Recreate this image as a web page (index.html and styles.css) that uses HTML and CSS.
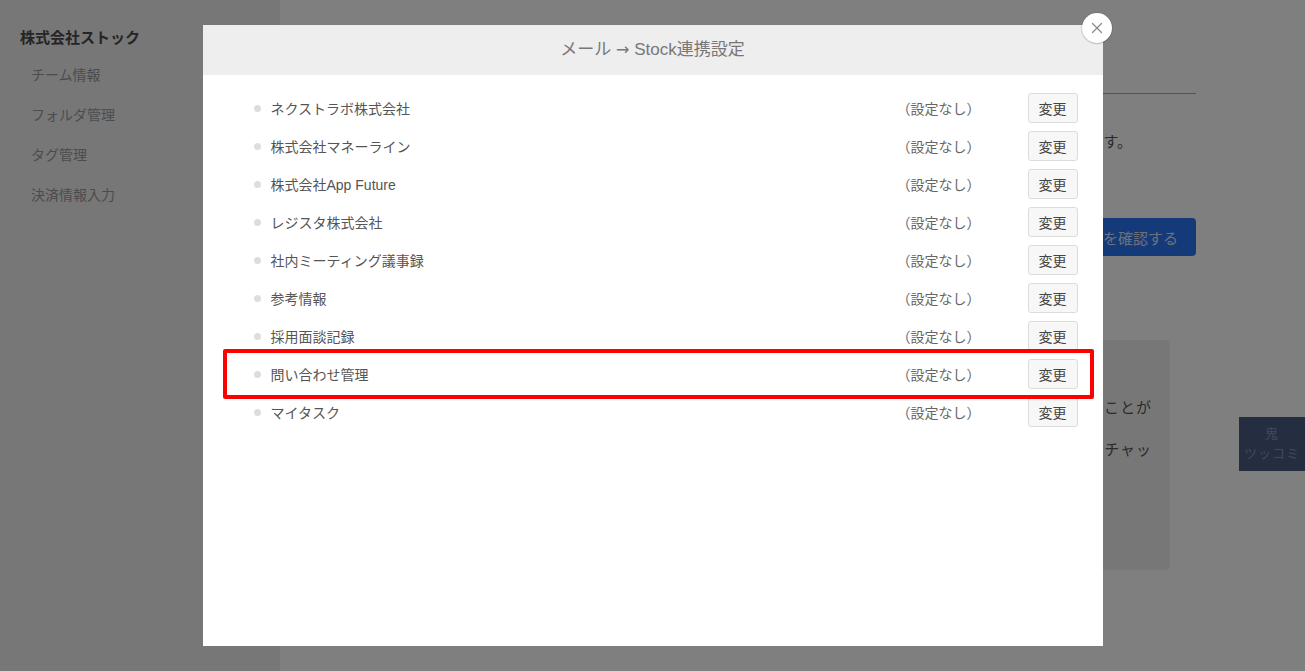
FILE: index.html
```html
<!DOCTYPE html>
<html lang="ja">
<head>
<meta charset="utf-8">
<title>メール → Stock連携設定</title>
<link rel="stylesheet" href="styles.css">
</head>
<body>
<div class="page">
  <aside class="sidebar">
    <div class="team-name">株式会社ストック</div>
    <ul class="side-menu">
      <li>チーム情報</li>
      <li>フォルダ管理</li>
      <li>タグ管理</li>
      <li>決済情報入力</li>
    </ul>
  </aside>
  <main class="main">
    <div class="content">
      <h1 class="page-title">メール連携</h1>
      <p class="lead">できる機能です。</p>
      <div class="action-row">
        <button class="primary-btn">アドレスを確認する</button>
      </div>
      <div class="info-box">
        <h2 class="info-title">使い方</h2>
        <p class="info-line">共有することが</p>
        <p class="info-line">には「チャッ</p>
      </div>
    </div>
  </main>
</div>

<div class="oni-btn">鬼<br>ツッコミ</div>

<div class="overlay"></div>

<div class="modal">
  <div class="modal-header">メール <span class="arrow">→</span> Stock連携設定</div>
  <button class="modal-close" aria-label="閉じる">
    <svg width="12" height="12" viewBox="0 0 12 12"><path d="M1.5 1.5 L10.5 10.5 M10.5 1.5 L1.5 10.5" stroke="#8a8a8a" stroke-width="1.3" fill="none" stroke-linecap="round"/></svg>
  </button>
  <ul class="folder-list">
    <li class="folder-row"><span class="dot"></span><span class="folder-name">ネクストラボ株式会社</span><span class="status">（設定なし）</span><button class="change-btn">変更</button></li>
    <li class="folder-row"><span class="dot"></span><span class="folder-name">株式会社マネーライン</span><span class="status">（設定なし）</span><button class="change-btn">変更</button></li>
    <li class="folder-row"><span class="dot"></span><span class="folder-name">株式会社App Future</span><span class="status">（設定なし）</span><button class="change-btn">変更</button></li>
    <li class="folder-row"><span class="dot"></span><span class="folder-name">レジスタ株式会社</span><span class="status">（設定なし）</span><button class="change-btn">変更</button></li>
    <li class="folder-row"><span class="dot"></span><span class="folder-name">社内ミーティング議事録</span><span class="status">（設定なし）</span><button class="change-btn">変更</button></li>
    <li class="folder-row"><span class="dot"></span><span class="folder-name">参考情報</span><span class="status">（設定なし）</span><button class="change-btn">変更</button></li>
    <li class="folder-row"><span class="dot"></span><span class="folder-name">採用面談記録</span><span class="status">（設定なし）</span><button class="change-btn">変更</button></li>
    <li class="folder-row"><span class="dot"></span><span class="folder-name">問い合わせ管理</span><span class="status">（設定なし）</span><button class="change-btn">変更</button></li>
    <li class="folder-row"><span class="dot"></span><span class="folder-name">マイタスク</span><span class="status">（設定なし）</span><button class="change-btn">変更</button></li>
  </ul>
  <div class="highlight"></div>
</div>
</body>
</html>
```

FILE: styles.css
```css
* { box-sizing: border-box; }

html, body {
  margin: 0;
  padding: 0;
  height: 100%;
}

body {
  font-family: "Liberation Sans", "Noto Sans CJK JP", sans-serif;
  color: #333;
  background: #fff;
  overflow: hidden;
}

.page {
  display: flex;
  height: 100%;
}

/* Sidebar */
.sidebar {
  width: 280px;
  flex: none;
  background: #eeeeee;
  padding: 28px 0 0 20px;
}

.team-name {
  font-size: 15px;
  font-weight: bold;
  line-height: 20px;
  color: #4a4a4a;
}

.side-menu {
  list-style: none;
  margin: 7px 0 0;
  padding: 0 0 0 11px;
}

.side-menu li {
  font-size: 14px;
  line-height: 40px;
  color: #999;
}

/* Main */
.main {
  flex: 1;
  padding: 31px 0 0 50px;
}

.content {
  width: 866px;
}

.page-title {
  margin: 0;
  font-size: 20px;
  line-height: 30px;
  font-weight: normal;
  padding: 15px 0 17px;
  border-bottom: 1px solid #a8a8a8;
  color: #333;
}

.lead {
  margin: 36px 0 0;
  font-size: 15px;
  line-height: 24px;
  color: #555;
  text-align: right;
  padding-right: 64px;
}

.action-row {
  display: flex;
  justify-content: flex-end;
  margin-top: 64px;
}

.primary-btn {
  height: 38px;
  padding: 0 18px;
  border: none;
  border-radius: 4px;
  background: #2a74f4;
  color: #d8e2f6;
  font-family: inherit;
  font-size: 15px;
}

.info-box {
  margin: 84px 26px 0 0;
  height: 230px;
  background: #eeeeee;
  border-radius: 4px;
  padding: 20px 18px;
}

.info-title {
  margin: 0 0 12px;
  font-size: 15px;
  line-height: 24px;
  color: #444;
}

.info-line {
  margin: 0 0 17px;
  font-size: 15px;
  line-height: 24px;
  color: #555;
  text-align: right;
  letter-spacing: 1px;
}

.info-line + .info-line {
  margin-top: 18px;
}

/* Floating widget (above overlay) */
.oni-btn {
  position: fixed;
  right: 0;
  top: 417px;
  width: 66px;
  height: 54px;
  background: #4b5c80;
  color: #8391b4;
  font-size: 13px;
  line-height: 20px;
  text-align: center;
  padding-top: 7px;
  letter-spacing: 1px;
  z-index: 5;
}

/* Overlay */
.overlay {
  position: fixed;
  inset: 0;
  background: rgba(0, 0, 0, 0.5);
  z-index: 10;
}

/* Modal */
.modal {
  position: fixed;
  left: 50%;
  top: 25px;
  bottom: 25px;
  width: 900px;
  margin-left: -450px;
  background: #fff;
  z-index: 20;
}

.modal-header {
  height: 50px;
  background: #eeeeee;
  color: #777;
  font-size: 17px;
  line-height: 50px;
  text-align: center;
}

.arrow {
  font-family: "DejaVu Sans", sans-serif;
  font-size: 16px;
}

.modal-close {
  position: absolute;
  top: -12px;
  right: -9px;
  width: 30px;
  height: 30px;
  border-radius: 50%;
  border: none;
  background: #fff;
  box-shadow: 0 0 0 1px rgba(0, 0, 0, 0.08), 0 1px 2px rgba(0, 0, 0, 0.15);
  display: flex;
  align-items: center;
  justify-content: center;
  padding: 0;
}

.folder-list {
  list-style: none;
  margin: 0;
  padding: 14px 25px 0 51px;
}

.folder-row {
  display: flex;
  align-items: center;
  height: 38px;
}

.dot {
  width: 7px;
  height: 7px;
  border-radius: 50%;
  background: #dddddd;
  flex: none;
  margin-right: 10px;
}

.folder-name {
  flex: 1;
  font-size: 14px;
  color: #555;
}

.status {
  width: 131px;
  flex: none;
  font-size: 14px;
  color: #666;
  font-family: "Noto Sans CJK JP", sans-serif;
}

.change-btn {
  width: 50px;
  height: 30px;
  flex: none;
  border: 1px solid #dcdcdc;
  border-radius: 3px;
  background: #f7f7f7;
  color: #444;
  font-family: inherit;
  font-size: 14px;
  padding: 0;
}

.highlight {
  position: absolute;
  left: 20px;
  top: 324px;
  width: 871px;
  height: 50px;
  border: 4px solid #ff0000;
  border-radius: 2px;
  pointer-events: none;
}
```
